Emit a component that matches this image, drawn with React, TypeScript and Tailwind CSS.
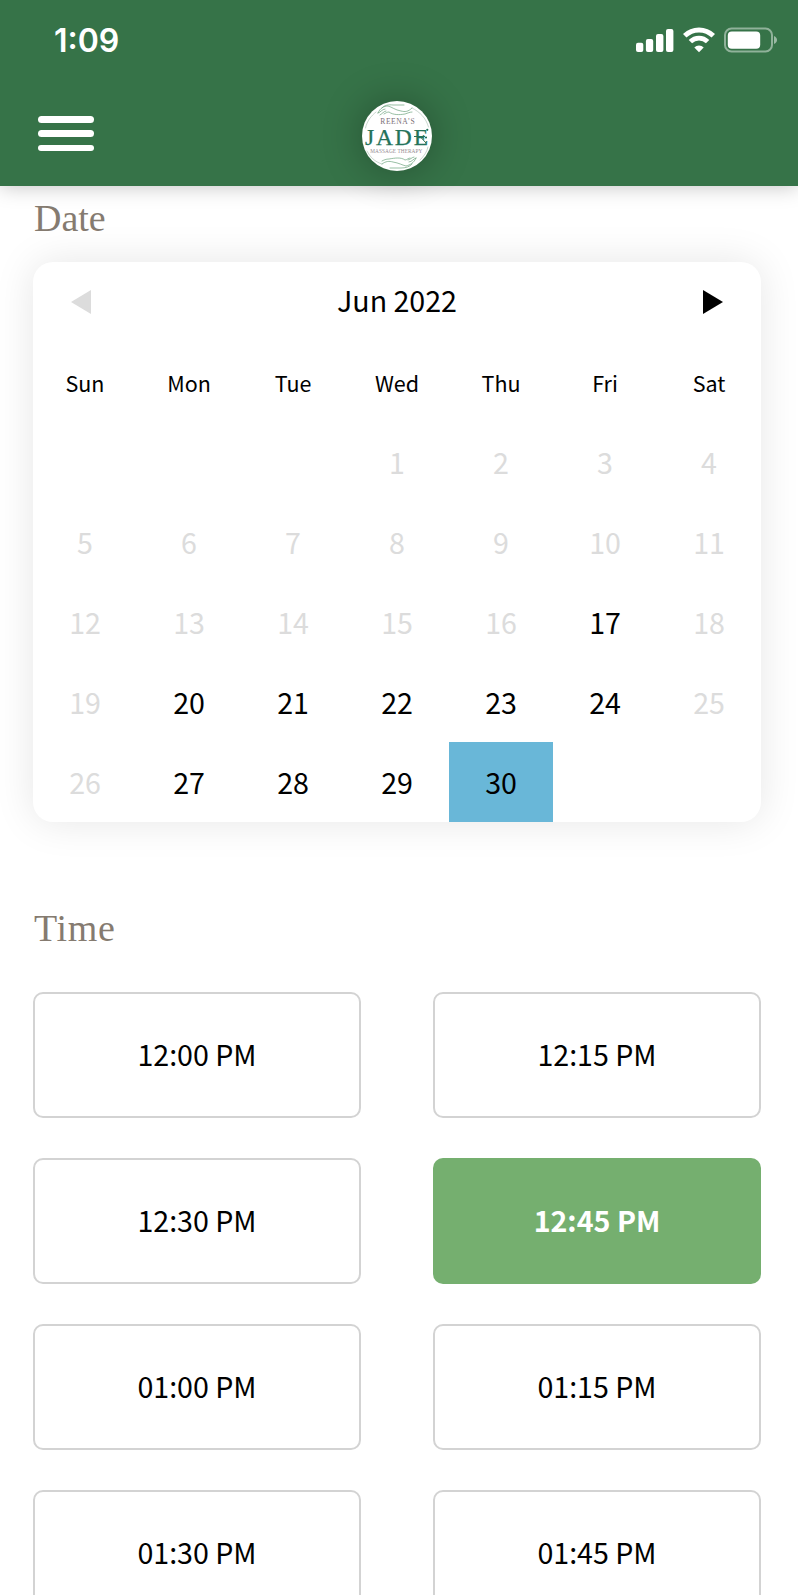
const WEEKDAYS = ["Sun", "Mon", "Tue", "Wed", "Thu", "Fri", "Sat"];
const LEADING_BLANKS = 3;
const AVAILABLE = new Set([17, 20, 21, 22, 23, 24, 27, 28, 29, 30]);
const SELECTED_DAY = 30;
const TIMES = [
  "12:00 PM",
  "12:15 PM",
  "12:30 PM",
  "12:45 PM",
  "01:00 PM",
  "01:15 PM",
  "01:30 PM",
  "01:45 PM",
];
const SELECTED_TIME = "12:45 PM";

function SignalIcon() {
  return (
    <svg width="38" height="26" viewBox="636 26 38 26" fill="#fff">
      <rect x="636" y="41.7" width="7.3" height="9.3" rx="2" />
      <rect x="645.9" y="38" width="7.3" height="13" rx="2" />
      <rect x="656" y="33" width="7.4" height="18" rx="2" />
      <rect x="666" y="28" width="7.4" height="23" rx="2" />
    </svg>
  );
}

function WifiIcon() {
  return (
    <svg width="32" height="26" viewBox="0 0 32 26" fill="none" stroke="#fff">
      <path d="M1.7 8.8 A20.4 20.4 0 0 1 30.3 8.8" strokeWidth="5" />
      <path d="M7.4 14.6 A12.2 12.2 0 0 1 24.6 14.6" strokeWidth="4.8" />
      <path d="M16 25.3 L11.3 20.5 A6.7 6.7 0 0 1 20.7 20.5 Z" fill="#fff" stroke="none" />
    </svg>
  );
}

function BatteryIcon() {
  return (
    <svg width="54" height="26" viewBox="0 0 54 26" fill="none">
      <rect x="1" y="1.6" width="47" height="22.8" rx="6.5" stroke="#fff" strokeOpacity=".45" strokeWidth="2" />
      <rect x="3.8" y="4.4" width="32.4" height="17.4" rx="4" fill="#fff" />
      <path d="M50 9 C54 10.5 54 15.5 50 17 Z" fill="#fff" fillOpacity=".5" />
    </svg>
  );
}

function Logo() {
  return (
    <svg width="70" height="70" viewBox="0 0 70 70" className="rounded-full bg-white shadow-[0_0_40px_rgba(0,0,0,0.3)]">
      <g fill="none" stroke="#6ba37c" strokeWidth=".7" strokeLinecap="round" strokeLinejoin="round">
        <path d="M16 12 C18 7 22 5 26 5 C30 6 33 9 39 10 C43 11 46 11 50 7" />
        <path d="M16 12 C18 12 20 8 23 8 M18 14 C20 13 22 10 24 10 M22 13 C24 12 25 11 27 11 C31 14 37 14 43 13 C46 12 48 11 50 11" />
        <path d="M20 7 C22 4 27 3.5 31 4 H42" />
        <path d="M54 57 C52 62 48 64 44 65 C40 64 37 62 31 61 C27 60 24 60 20 63" />
        <path d="M54 57 C52 57 50 61 47 61 M52 56 C50 56 48 59 46 59 M48 57 C46 57 45 59 43 59 C39 56 33 57 27 58 C24 58 22 59 20 60" />
        <path d="M50 63 C48 66 43 67 39 67 H28" />
        <g stroke="#a5bcac" strokeWidth=".6">
          <path d="M3.5 27 C5 20 9 15 14 11" />
          <path d="M50 7 C58 11 64 17 66.5 26" />
          <path d="M5 50 C8 56 13 61 20 63" />
          <path d="M66 46 C65 51 62 55 58 59" />
        </g>
      </g>
      <text x="18.3" y="23" fontSize="7.6" textLength="34.5" fill="#7b7078" fontFamily="Liberation Serif, serif">REENA’S</text>
      <text x="3" y="43.6" fontSize="23.5" textLength="63" fill="#24735a" stroke="#24735a" strokeWidth=".25" fontFamily="Liberation Serif, serif">JADE</text>
      <path d="M52 35.5 H63 M59 36.5 L64 42" fill="none" stroke="#24735a" strokeWidth="1" />
      <circle cx="65.3" cy="28.8" r="1.1" fill="#24735a" />
      <circle cx="64" cy="36.5" r="1.1" fill="#24735a" />
      <text x="8.3" y="52.2" fontSize="5.3" textLength="52" fill="#968c92" fontFamily="Liberation Serif, serif">MASSAGE THERAPY</text>
    </svg>
  );
}

export default function App() {
  const days = Array.from({ length: 30 }, (_, i) => i + 1);
  return (
    <div className="h-[1595px] w-[798px] overflow-hidden bg-white font-['Noto_Sans_CJK_SC','Noto_Sans',sans-serif] text-black">
      <header className="h-[186px] bg-[#367348] shadow-[0_0_20px_rgba(0,0,0,0.25)]">
        <div className="flex h-20 items-center pr-[20px] pl-[54px]">
          <span className="flex-1 pt-[2px] font-['Inter',sans-serif] text-[32px] leading-none font-semibold text-white">1:09</span>
          <div className="flex items-center gap-[9px]">
            <SignalIcon />
            <WifiIcon />
            <BatteryIcon />
          </div>
        </div>
        <div className="grid h-[106px] grid-cols-[1fr_70px_1fr] items-start pr-1">
          <button className="mt-9 ml-[38px] flex w-14 flex-col gap-[7.8px]" aria-label="Menu">
            <span className="h-[6.5px] w-full rounded-full bg-white" />
            <span className="h-[6.5px] w-full rounded-full bg-white" />
            <span className="h-[6.5px] w-full rounded-full bg-white" />
          </button>
          <div className="mt-[21px]">
            <Logo />
          </div>
        </div>
      </header>

      <main className="pr-[37px] pl-[33px]">
        <h2 className="flex h-[76px] items-start pt-[13px] pl-px font-['Liberation_Serif',serif] text-[38px] leading-[38px] text-[#857b70]">Date</h2>

        <section className="h-[560px] overflow-hidden rounded-[20px] bg-white shadow-[0_0_40px_rgba(0,0,0,0.1)]">
          <div className="flex h-20 items-center justify-between px-[38px]">
            <svg width="20" height="24" viewBox="0 0 20 24" fill="#dcdcdc"><path d="M0 12 L20 0 V24 Z" /></svg>
            <span className="pb-1 text-[28.6px] leading-none">Jun 2022</span>
            <svg width="20" height="24" viewBox="0 0 20 24" fill="#000"><path d="M20 12 L0 0 V24 Z" /></svg>
          </div>
          <div className="grid grid-cols-7">
            {WEEKDAYS.map((day) => (
              <div key={day} className="flex h-20 items-center justify-center pt-[2px] text-[21.5px] leading-none">{day}</div>
            ))}
            {Array.from({ length: LEADING_BLANKS }, (_, i) => (
              <div key={`blank-${i}`} className="h-20" />
            ))}
            {days.map((day) => (
              <div
                key={day}
                className={`flex h-20 items-center justify-center text-[28.6px] leading-none ${
                  day === SELECTED_DAY ? "bg-[#69b7d8]" : ""
                } ${AVAILABLE.has(day) ? "text-black" : "text-[#dcdcdc]"}`}
              >
                {day}
              </div>
            ))}
          </div>
        </section>

        <h2 className="mt-[87px] flex h-[83px] items-start pl-px font-['Liberation_Serif',serif] text-[38px] leading-[38px] tracking-[0.7px] text-[#857b70]">Time</h2>

        <div className="grid grid-cols-2 gap-x-[72px] gap-y-10">
          {TIMES.map((time) => (
            <button
              key={time}
              className={`flex h-[126px] items-center justify-center rounded-[10px] pb-[2px] text-[28.6px] leading-none ${
                time === SELECTED_TIME ? "bg-[#75af6f] font-bold text-white" : "border-2 border-[#d3d3d3]"
              }`}
            >
              {time}
            </button>
          ))}
        </div>
      </main>
    </div>
  );
}
